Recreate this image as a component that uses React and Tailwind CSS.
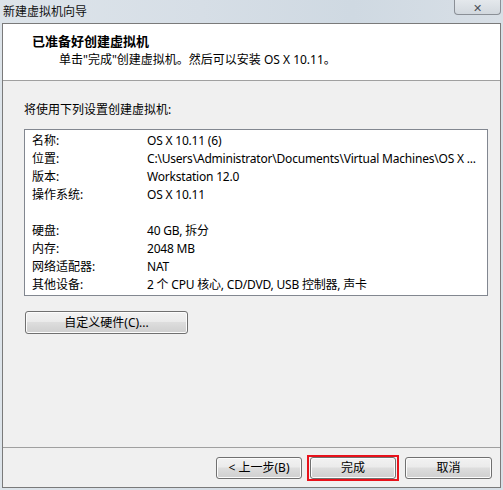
import React from "react";

const FONT = { fontFamily: "'Noto Sans', 'Noto Sans CJK SC', sans-serif" };

function WinButton({ children, className = "" }) {
  return (
    <div
      className={
        "h-[22px] rounded-[3px] border border-[#707070] flex items-center justify-center text-[12px] text-black " +
        "bg-[linear-gradient(to_bottom,#f2f2f2_0%,#ebebeb_45%,#dddddd_50%,#cfcfcf_100%)] shadow-[inset_0_0_0_1px_#fcfcfc] " +
        className
      }
    >
      {children}
    </div>
  );
}

const rows = [
  ["名称:", "OS X 10.11 (6)"],
  ["位置:", "C:\\Users\\Administrator\\Documents\\Virtual Machines\\OS X ..."],
  ["版本:", "Workstation 12.0"],
  ["操作系统:", "OS X 10.11"],
  ["", ""],
  ["硬盘:", "40 GB, 拆分"],
  ["内存:", "2048 MB"],
  ["网络适配器:", "NAT"],
  ["其他设备:", "2 个 CPU 核心, CD/DVD, USB 控制器, 声卡"],
];

export default function App() {
  return (
    <div
      className="relative w-[503px] h-[490px] overflow-hidden bg-[linear-gradient(to_right,#dde4ea,#d6dee6_40%,#cfd9e2_70%,#d8dfe6)] text-[12px] text-black"
      style={FONT}
    >
      {/* title bar */}
      <div className="h-[23px] flex items-center pl-[3px] text-[12px] leading-none text-[#111]">
        新建虚拟机向导
      </div>
      {/* close button */}
      <div className="absolute left-[454px] top-0 w-[47px] h-[15px] rounded-b-[4px] border border-t-0 border-[#8a8f96] bg-[linear-gradient(to_bottom,#e4e8ec,#d2d8de)] flex items-center justify-center text-[11px] leading-none text-[#4a5058]">
        ✕
      </div>

      {/* window client area */}
      <div className="ml-[2px] w-[499px] h-[465px] border border-[#7a7a7a] bg-[#f0f0f0] flex flex-col">
        {/* header */}
        <div className="h-[57px] bg-white border-b border-[#a0a0a0] flex flex-col pl-[29px] pt-[8px]">
          <div className="font-bold text-[13px] leading-[18px]">已准备好创建虚拟机</div>
          <div className="pl-[27px] leading-[19px]">单击"完成"创建虚拟机。然后可以安装 OS X 10.11。</div>
        </div>

        {/* body */}
        <div className="flex-1 pl-[21px] pt-[20px] flex flex-col">
          <div className="leading-[18px]">将使用下列设置创建虚拟机:</div>
          <div className="mt-[10px] w-[464px] h-[167px] border border-[#828790] bg-white pl-[7px] pt-[2px]">
            {rows.map(([k, v], i) => (
              <div key={i} className="flex h-[18px] items-center leading-[18px] whitespace-nowrap">
                <div className="w-[115px]">{k}</div>
                <div className="tracking-[-0.2px]">{v}</div>
              </div>
            ))}
          </div>
          <div className="mt-[15px] ml-[1px]">
            <WinButton className="w-[163px] h-[23px]">自定义硬件(C)...</WinButton>
          </div>
        </div>

        {/* footer */}
        <div className="h-[40px] border-t border-[#a0a0a0] flex items-start pt-[9px] pl-[213px]">
          <WinButton className="w-[86px]">&lt; 上一步(B)</WinButton>
          <div className="relative ml-[8px]">
            <WinButton className="w-[86px]">完成</WinButton>
            <div className="absolute left-[-3px] top-[-2px] w-[92px] h-[26px] border-2 border-[#e8121b] pointer-events-none" />
          </div>
          <WinButton className="w-[87px] ml-[9px]">取消</WinButton>
        </div>
      </div>
    </div>
  );
}
